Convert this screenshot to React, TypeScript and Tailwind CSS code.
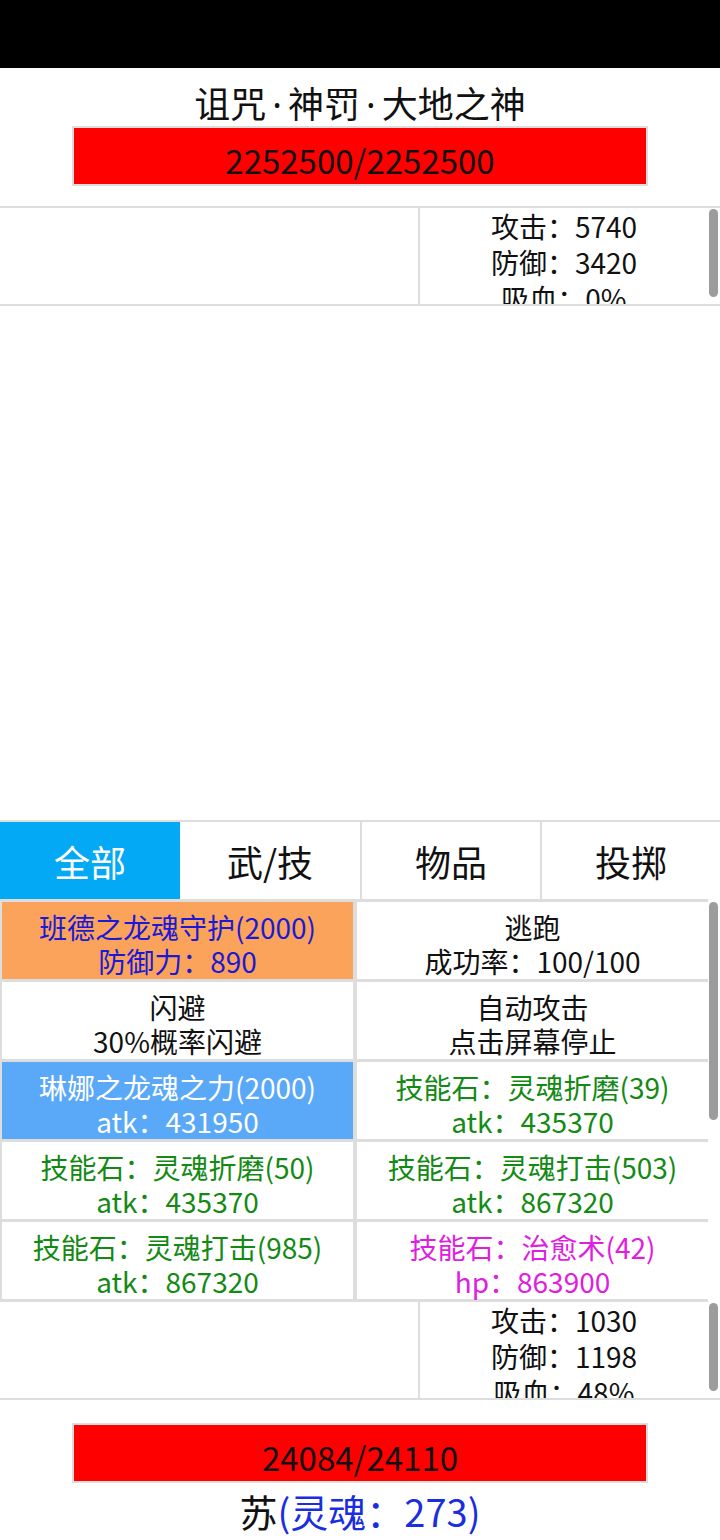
const font = { fontFamily: '"Noto Sans CJK SC", "Noto Sans", sans-serif' };

type Cell = { title: string; sub: string; bg: string; text: string };

const cells: Cell[] = [
  { title: '班德之龙魂守护(2000)', sub: '防御力：890', bg: 'bg-[#fba35b]', text: 'text-[#1a1ad6]' },
  { title: '逃跑', sub: '成功率：100/100', bg: 'bg-white', text: 'text-[#111]' },
  { title: '闪避', sub: '30%概率闪避', bg: 'bg-white', text: 'text-[#111]' },
  { title: '自动攻击', sub: '点击屏幕停止', bg: 'bg-white', text: 'text-[#111]' },
  { title: '琳娜之龙魂之力(2000)', sub: 'atk：431950', bg: 'bg-[#5aa8f8]', text: 'text-white' },
  { title: '技能石：灵魂折磨(39)', sub: 'atk：435370', bg: 'bg-white', text: 'text-[#138a13]' },
  { title: '技能石：灵魂折磨(50)', sub: 'atk：435370', bg: 'bg-white', text: 'text-[#138a13]' },
  { title: '技能石：灵魂打击(503)', sub: 'atk：867320', bg: 'bg-white', text: 'text-[#138a13]' },
  { title: '技能石：灵魂打击(985)', sub: 'atk：867320', bg: 'bg-white', text: 'text-[#138a13]' },
  { title: '技能石：治愈术(42)', sub: 'hp：863900', bg: 'bg-white', text: 'text-[#e01ee0]' },
];

function StatsPanel({ atk, def, leech }: { atk: string; def: string; leech: string }) {
  return (
    <div className="relative flex h-[98px] border-b-2 border-[#ddd]">
      <div className="w-[420px] border-r-2 border-[#ddd]" />
      <div className="flex-1 overflow-hidden pr-[12px] text-center text-[28px] leading-[36px] text-[#111]">
        <div>攻击：{atk}</div>
        <div>防御：{def}</div>
        <div>吸血：{leech}</div>
      </div>
      <div className="absolute right-[2px] top-[1px] h-[88px] w-[9px] rounded-full bg-[#9c9c9c]" />
    </div>
  );
}

function HpBar({ value }: { value: string }) {
  return (
    <div className="mx-auto flex h-[60px] w-[576px] items-center justify-center border-2 border-[#ddd] bg-[#ff0000] pt-[10px] text-[33px] text-[#111]">
      {value}
    </div>
  );
}

const Dot = () => (
  <span className="px-[6px]" style={{ fontFamily: '"Noto Sans", sans-serif' }}>
    ·
  </span>
);

export default function App() {
  const tabs = ['全部', '武/技', '物品', '投掷'];
  return (
    <div className="flex h-[1540px] w-[720px] flex-col overflow-hidden bg-white" style={font}>
      <div className="h-[68px] bg-black" />

      <div className="mt-[12px] flex h-[44px] items-baseline justify-center overflow-visible text-[36px] leading-[44px] text-[#111]">
        <span>诅咒</span>
        <Dot />
        <span>神罚</span>
        <Dot />
        <span>大地之神</span>
      </div>
      <div className="mt-[2px]">
        <HpBar value="2252500/2252500" />
      </div>

      <div className="mt-[20px] border-t-2 border-[#ddd]">
        <StatsPanel atk="5740" def="3420" leech="0%" />
      </div>

      <div className="flex-1" />

      <div className="flex h-[79px] border-t-2 border-[#ddd]">
        {tabs.map((t, i) => (
          <div
            key={t}
            className={`flex w-[180px] items-center justify-center text-[36px] ${
              i === 0 ? 'bg-[#03a9f4] text-white' : 'bg-white text-[#111]'
            } ${i >= 2 ? 'border-l-2 border-[#ddd]' : ''}`}
          >
            {t}
          </div>
        ))}
      </div>

      <div className="relative flex bg-white">
        <div className="grid w-[708px] grid-cols-2 gap-x-[4px] gap-y-[3px] bg-[#ddd] py-[3px] pl-[2px]">
          {cells.map((c, i) => (
            <div
              key={i}
              className={`flex h-[77px] flex-col items-center justify-center pt-[6px] text-[28px] leading-[34px] ${c.bg} ${c.text}`}
            >
              <div>{c.title}</div>
              <div>{c.sub}</div>
            </div>
          ))}
        </div>
        <div className="absolute right-[2px] top-[3px] h-[218px] w-[9px] rounded-full bg-[#9c9c9c]" />
      </div>

      <StatsPanel atk="1030" def="1198" leech="48%" />

      <div className="h-[140px] pt-[23px]">
        <HpBar value="24084/24110" />
        <div className="mt-[4px] text-center text-[38px] leading-[48px]">
          <span className="text-[#111]">苏</span>
          <span className="text-[#1a2ee0]">(灵魂：273)</span>
        </div>
      </div>
    </div>
  );
}
